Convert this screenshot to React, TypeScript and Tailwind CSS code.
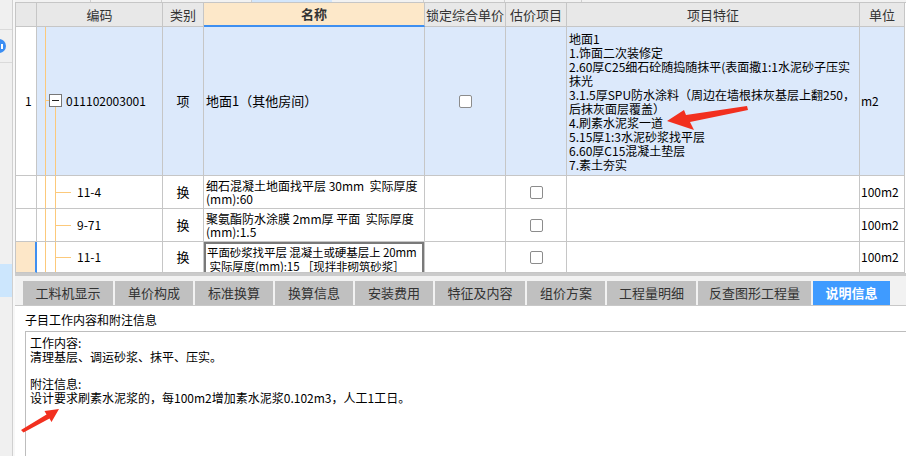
import React from "react";

const FONT = { fontFamily: '"Noto Sans CJK SC", "Noto Sans", sans-serif' };

const GRID = "grid grid-cols-[21px_126px_41px_221px_81px_61px_293px_45px]";
const CELL = "border-r border-b border-[#c6c6c6] overflow-hidden";

const featureLines = [
    "地面1",
    "1.饰面二次装修定",
    "2.60厚C25细石砼随捣随抹平(表面撒1:1水泥砂子压实",
    "抹光",
    "3.1.5厚SPU防水涂料（周边在墙根抹灰基层上翻250，",
    "后抹灰面层覆盖）",
    "4.刷素水泥浆一道",
    "5.15厚1:3水泥砂浆找平层",
    "6.60厚C15混凝土垫层",
    "7.素土夯实",
];

const subRows = [
    { code: "11-4", name: ["细石混凝土地面找平层 30mm  实际厚度", "(mm):60"], editing: false },
    { code: "9-71", name: ["聚氨酯防水涂膜 2mm厚 平面  实际厚度", "(mm):1.5"], editing: false },
    { code: "11-1", name: ["平面砂浆找平层 混凝土或硬基层上 20mm", " 实际厚度(mm):15 ［现拌非砌筑砂浆］"], editing: true },
];

const tabs = [
    { label: "工料机显示", w: "w-[90px]" },
    { label: "单价构成", w: "w-[78px]" },
    { label: "标准换算", w: "w-[78px]" },
    { label: "换算信息", w: "w-[78px]" },
    { label: "安装费用", w: "w-[78px]" },
    { label: "特征及内容", w: "w-[90px]" },
    { label: "组价方案", w: "w-[78px]" },
    { label: "工程量明细", w: "w-[89px]" },
    { label: "反查图形工程量", w: "w-[113px]" },
    { label: "说明信息", w: "w-[77px]", active: true },
];

function Check() {
    return <span className="block w-[13px] h-[13px] rounded-[2px] border border-[#8c8c8c] bg-white" />;
}

function HeaderRow() {
    const h = "h-[24px] flex items-center justify-center text-[13px] text-[#333] bg-[#e8e8e8] whitespace-nowrap";
    return (
        <div className={GRID}>
            <div className={`${CELL} ${h}`} />
            <div className={`${CELL} ${h}`}>编码</div>
            <div className={`${CELL} ${h}`}>类别</div>
            <div className={`${CELL} ${h} !bg-[#fde8c9] !border-b-2 !border-b-[#3f8ff0] font-bold text-[#222]`}>名称</div>
            <div className={`${CELL} ${h}`}>锁定综合单价</div>
            <div className={`${CELL} ${h}`}>估价项目</div>
            <div className={`${CELL} ${h}`}>项目特征</div>
            <div className={`${CELL} ${h}`}>单位</div>
        </div>
    );
}

function MainRow() {
    const blue = "bg-[#dce9fb]";
    return (
        <div className={`${GRID} h-[149px] text-[12px] leading-[14px] text-black`}>
            <div className={`${CELL} bg-white flex items-center pl-[9px]`}>1</div>
            <div className={`${CELL} ${blue} relative flex items-center pl-[29px]`}>
                <span className="absolute left-[8px] top-0 bottom-0 w-px bg-[#fcc97b]" />
                <span className="absolute left-[8px] top-[73px] w-[4px] h-px bg-[#fcc97b]" />
                <span className="absolute left-[18px] top-[80px] bottom-0 w-px bg-[#fcc97b]" />
                <span className="absolute left-[12px] top-[67px] w-[13px] h-[13px] border border-[#777] bg-white flex items-center justify-center">
                    <span className="block w-[7px] h-px bg-[#222]" />
                </span>
                <span>011102003001</span>
            </div>
            <div className={`${CELL} ${blue} flex items-center justify-center text-[13px]`}>项</div>
            <div className={`${CELL} ${blue} flex items-center pl-[2px] whitespace-nowrap text-[13px]`}>地面1（其他房间）</div>
            <div className={`${CELL} ${blue} flex items-center justify-center`}>
                <Check />
            </div>
            <div className={`${CELL} ${blue}`} />
            <div className={`${CELL} ${blue} pt-[5px] pl-[2px]`}>
                {featureLines.map((l) => (
                    <div key={l} className="whitespace-nowrap">{l}</div>
                ))}
            </div>
            <div className={`${CELL} ${blue} flex items-center pl-[1px]`}>m2</div>
        </div>
    );
}

function SubRow({ code, name, editing, last }: { code: string; name: string[]; editing: boolean; last?: boolean }) {
    return (
        <div className={`${GRID} ${last ? "h-[31px]" : "h-[33px]"} text-[12px] text-black bg-white`}>
            <div className={`${CELL} ${editing ? "bg-[#fde7c8] !border-r-2 !border-r-[#3f8ff0]" : ""}`} />
            <div className={`${CELL} relative flex items-center pl-[40px]`}>
                <span className="absolute left-[8px] top-0 bottom-0 w-px bg-[#fcc97b]" />
                <span className="absolute left-[18px] top-0 bottom-0 w-px bg-[#fcc97b]" />
                <span className="absolute left-[18px] top-1/2 w-[16px] h-px bg-[#fcc97b]" />
                <span>{code}</span>
            </div>
            <div className={`${CELL} flex items-center justify-center text-[13px]`}>换</div>
            <div className={`${CELL} ${editing ? "" : "pt-[3px] pl-[2px]"} leading-[13px]`}>
                {editing ? (
                    <div className="h-full border-2 border-b-0 border-[#7a7a7a] pl-[1px] pt-[1px] leading-[14px] text-[11.5px] tracking-[-0.1px]">
                        {name.map((l) => (
                            <div key={l} className="whitespace-pre">{l}</div>
                        ))}
                    </div>
                ) : (
                    name.map((l) => (
                        <div key={l} className="whitespace-pre">{l}</div>
                    ))
                )}
            </div>
            <div className={`${CELL}`} />
            <div className={`${CELL} flex items-center justify-center`}>
                <Check />
            </div>
            <div className={`${CELL}`} />
            <div className={`${CELL} flex items-center pl-[1px]`}>100m2</div>
        </div>
    );
}

function LeftStrip() {
    return (
        <div className="w-[13px] shrink-0 bg-[#f0f0f0] border-r border-[#d0d0d0] flex flex-col">
            <div className="h-[30px] border-b border-[#dadada]" />
            <div className="h-[33px] border-b border-[#dadada] flex items-center">
                <span className="-ml-[8px] w-[14px] h-[14px] rounded-full bg-[#3c8ef3] flex items-center justify-end pr-[3px]">
                    <span className="block w-[4px] h-[5px] border-r-2 border-white" />
                </span>
            </div>
            <div className="h-[201px]" />
            <div className="h-[33px] bg-[#cce6fd]" />
            <div className="flex-1" />
        </div>
    );
}

function Arrows() {
    return (
        <svg className="absolute inset-0 pointer-events-none" width="906" height="456" viewBox="0 0 906 456">
            <polygon
                fill="#f2301f"
                points="667,121 684,110 686,115 747,106 748,110 690,122 694,130"
            />
            <polygon
                fill="#f2301f"
                points="59,409 44.5,411 46.5,414.5 21,430 23.5,432.5 49.5,418.5 51.5,422"
            />
        </svg>
    );
}

export default function App() {
    return (
        <div className="relative w-[906px] h-[456px] overflow-hidden bg-white flex" style={FONT}>
            <LeftStrip />
            <div className="w-[2px] shrink-0 bg-[#f7f7f7]" />
            <div className="flex-1 flex flex-col min-w-0">
                {/* strip of the panel above */}
                <div className="h-[3px] flex bg-[#f2f2f2] border-b border-[#c6c6c6]">
                    <div className="w-[76px] border-r border-[#cfcfcf]" />
                    <div className="w-[71px] border-r border-[#cfcfcf]" />
                    <div className="w-[90px] border-r border-[#cfcfcf]" />
                    <div className="w-[80px] bg-[#d3e6fb]" />
                    <div className="w-[92px] border-r border-[#cfcfcf]" />
                    <div className="w-[81px] border-r border-[#cfcfcf]" />
                    <div className="w-[77px] border-r border-[#cfcfcf]" />
                    <div className="flex-1" />
                </div>

                {/* table */}
                <div className="h-[270px] overflow-hidden border-l border-[#c6c6c6] shrink-0">
                    <HeaderRow />
                    <MainRow />
                    {subRows.map((r, i) => (
                        <SubRow key={r.code} {...r} last={i === subRows.length - 1} />
                    ))}
                </div>

                <div className="h-[3px] bg-[#cbcbcb] shrink-0" />

                {/* tabs */}
                <div className="h-[30px] shrink-0 bg-[#f2f2f2] border-b border-[#c8c8c8] flex items-end gap-[2px] pl-[8px]">
                    {tabs.map((t) => (
                        <div
                            key={t.label}
                            className={`${t.w} h-[24px] flex items-center justify-center text-[13px] whitespace-nowrap ${
                                t.active ? "bg-[#3f9bff] text-white font-bold" : "bg-[#c0c0c0] text-[#333]"
                            }`}
                        >
                            {t.label}
                        </div>
                    ))}
                </div>

                {/* description panel */}
                <div className="flex-1 bg-white pl-[10px] pt-[6px] flex flex-col">
                    <div className="text-[12px] leading-[16px] text-black">子目工作内容和附注信息</div>
                    <div className="mt-[3px] flex-1 border-l border-t border-[#bdbdbd] pl-[4px] pt-[4px] text-[12px] leading-[14px] text-black">
                        <div>工作内容:</div>
                        <div>清理基层、调运砂浆、抹平、压实。</div>
                        <div className="h-[13px]" />
                        <div>附注信息:</div>
                        <div>设计要求刷素水泥浆的，每100m2增加素水泥浆0.102m3，人工1工日。</div>
                    </div>
                </div>
            </div>
            <Arrows />
        </div>
    );
}
